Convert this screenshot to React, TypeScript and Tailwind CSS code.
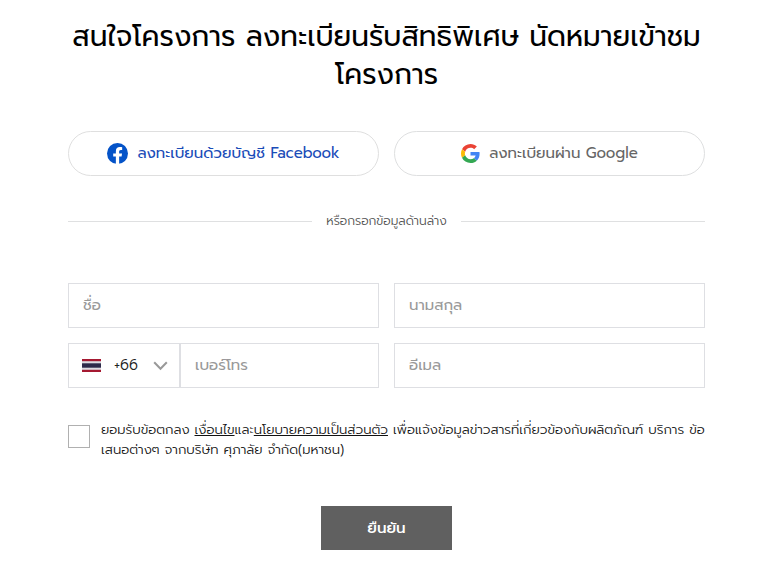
import type { ReactNode } from "react";

function FacebookIcon() {
  return (
    <svg width="21" height="21" viewBox="0 0 24 24" aria-hidden="true">
      <circle cx="12" cy="12" r="12" fill="#0453c8" />
      <path
        d="M16.67 15.47l.53-3.47h-3.33V9.75c0-.95.47-1.88 1.96-1.88h1.51V4.92s-1.37-.23-2.68-.23c-2.74 0-4.53 1.66-4.53 4.67V12H7.08v3.47h3.05V24h3.74v-8.53z"
        fill="#fff"
      />
    </svg>
  );
}

function GoogleIcon() {
  return (
    <svg width="19" height="19" viewBox="0 0 48 48" aria-hidden="true">
      <path
        fill="#EA4335"
        d="M24 9.5c3.54 0 6.71 1.22 9.21 3.6l6.85-6.85C35.9 2.38 30.47 0 24 0 14.62 0 6.51 5.38 2.56 13.22l7.98 6.19C12.43 13.72 17.74 9.5 24 9.5z"
      />
      <path
        fill="#4285F4"
        d="M46.98 24.55c0-1.57-.15-3.09-.38-4.55H24v9.02h12.94c-.58 2.96-2.26 5.48-4.78 7.18l7.73 6c4.51-4.18 7.09-10.36 7.09-17.65z"
      />
      <path
        fill="#FBBC05"
        d="M10.53 28.59c-.48-1.45-.76-2.99-.76-4.59s.27-3.14.76-4.59l-7.98-6.19C.92 16.46 0 20.12 0 24c0 3.88.92 7.54 2.56 10.78l7.97-6.19z"
      />
      <path
        fill="#34A853"
        d="M24 48c6.48 0 11.93-2.13 15.89-5.81l-7.73-6c-2.15 1.45-4.92 2.3-8.16 2.3-6.26 0-11.57-4.22-13.47-9.91l-7.98 6.19C6.51 42.62 14.62 48 24 48z"
      />
    </svg>
  );
}

function ThaiFlag() {
  return (
    <svg width="19" height="13" viewBox="0 0 19 13" aria-hidden="true">
      <rect width="19" height="13" fill="#a51931" />
      <rect y="2.2" width="19" height="8.6" fill="#dcdce2" />
      <rect y="4.3" width="19" height="4.4" fill="#2d2a4a" />
    </svg>
  );
}

function Field({ children }: { children: ReactNode }) {
  return (
    <div className="flex h-[45px] items-center border border-[#dedfe3] pl-3.5 text-[15px] text-[#999]">
      {children}
    </div>
  );
}

export default function App() {
  return (
    <main className="h-[581px] overflow-hidden bg-white pl-[68px] pr-[63px] pt-[18px] font-['Prompt','Noto_Sans_Thai','Open_Sans',sans-serif]">
      <h1 className="text-center text-[28.1px] leading-[38px] whitespace-nowrap text-black">
        สนใจโครงการ ลงทะเบียนรับสิทธิพิเศษ นัดหมายเข้าชม
        <br />
        โครงการ
      </h1>

      <div className="mt-[37px] grid grid-cols-2 gap-[15px] text-[15px] whitespace-nowrap">
        <button className="flex h-[45px] items-center justify-center gap-[9px] rounded-full border border-[#dfdfdf] text-[#1a4cb8]">
          <FacebookIcon />
          <span>ลงทะเบียนด้วยบัญชี Facebook</span>
        </button>
        <button className="flex h-[45px] items-center justify-center gap-[9px] rounded-full border border-[#dedfe0] text-[#666]">
          <GoogleIcon />
          <span>ลงทะเบียนผ่าน Google</span>
        </button>
      </div>

      <div className="mt-[35px] flex h-5 items-center text-[12.3px] font-light whitespace-nowrap text-[#505050]">
        <span className="h-px w-[244px] bg-[#dfe0e1]" />
        <span className="flex-1 text-center">หรือกรอกข้อมูลด้านล่าง</span>
        <span className="h-px w-[244px] bg-[#dfe0e1]" />
      </div>

      <div className="mt-[52px] grid grid-cols-2 gap-[15px]">
        <Field>ชื่อ</Field>
        <Field>นามสกุล</Field>
        <div className="grid grid-cols-[112px_1fr]">
          <div className="flex h-[45px] items-center border border-[#dedfe3] pl-[13px] text-[15px] font-light text-[#222]">
            <ThaiFlag />
            <span className="ml-[13px] w-[26px]">+66</span>
            <svg className="ml-[13px]" width="15" height="10" viewBox="0 0 15 10" fill="none" aria-hidden="true">
              <path d="M1.2 1.2 7.5 7.8 13.8 1.2" stroke="#999" strokeWidth="2" />
            </svg>
          </div>
          <Field>เบอร์โทร</Field>
        </div>
        <Field>อีเมล</Field>
      </div>

      <div className="mt-8 flex text-[13.31px] leading-5 font-light text-[#111]">
        <span className="mt-[5px] mr-[11px] h-[23px] w-[22px] shrink-0 border border-[#b0b0b0]" />
        <p className="whitespace-nowrap">
          ยอมรับข้อตกลง <a className="underline">เงื่อนไข</a>และ
          <a className="underline">นโยบายความเป็นส่วนตัว</a>{" "}
          เพื่อแจ้งข้อมูลข่าวสารที่เกี่ยวข้องกับผลิตภัณฑ์ บริการ ข้อ
          <br />
          เสนอต่างๆ จากบริษัท ศุภาลัย จำกัด(มหาชน)
        </p>
      </div>

      <button className="mt-[46px] ml-[253px] flex h-11 w-[131px] items-center justify-center bg-[#606060] text-[15px] font-medium text-white">
        ยืนยัน
      </button>
    </main>
  );
}
